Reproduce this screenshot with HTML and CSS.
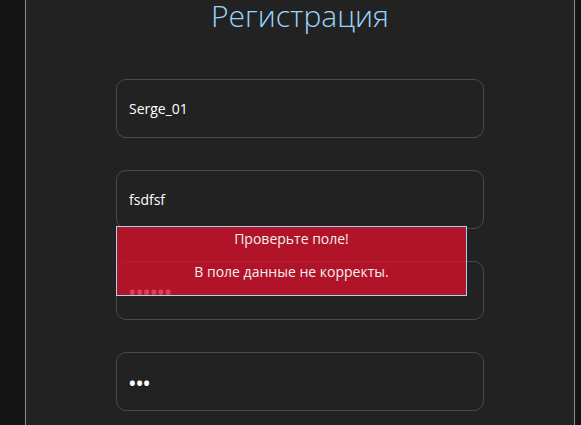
FILE: index.html
```html
<!DOCTYPE html>
<html lang="ru">
<head>
<meta charset="utf-8">
<title>Регистрация</title>
<link rel="stylesheet" href="styles.css">
</head>
<body>
<div class="gutter"></div>
<main class="panel">
  <h1 class="title">Регистрация</h1>
  <form class="form">
    <div class="field"><span class="value">Serge_01</span></div>
    <div class="field"><span class="value">fsdfsf</span></div>
    <div class="field"><span class="value dots">••••••</span></div>
    <div class="field"><span class="value dots">•••</span></div>
    <div class="tooltip">
      <p class="tip-line">Проверьте поле!</p>
      <p class="tip-line">В поле данные не корректы.</p>
    </div>
  </form>
</main>
<div class="gutter-right"></div>
</body>
</html>
```

FILE: styles.css
```css
html, body {
  margin: 0;
  height: 100%;
}
body {
  display: flex;
  background: #141414;
  font-family: "Open Sans", "Noto Sans", sans-serif;
  overflow: hidden;
}
.gutter {
  width: 25px;
  flex: none;
}
.panel {
  flex: none;
  background: #222222;
  border-left: 1px solid #8c8c8c;
  border-right: 1px solid #8c8c8c;
  box-sizing: border-box;
  width: 550px;
}
.gutter-right {
  flex: 1;
}
.title {
  margin: 0;
  font-size: 30px;
  line-height: 31px;
  font-weight: 300;
  color: #9ad6fb;
  text-align: center;
}
.form {
  position: relative;
  width: 368px;
  margin: 48px auto 0;
  display: flex;
  flex-direction: column;
  gap: 32px;
}
.field {
  height: 59px;
  box-sizing: border-box;
  border: 1px solid #4a4a4a;
  border-radius: 10px;
  display: flex;
  align-items: center;
  padding: 0 12px;
}
.value {
  color: #ffffff;
  font-size: 14px;
}
.dots {
  font-size: 23px;
  line-height: 24px;
  letter-spacing: -1.5px;
  margin-left: -1px;
  position: relative;
  top: 1px;
}
.tooltip {
  position: absolute;
  left: 0;
  top: 147px;
  width: 351px;
  height: 70px;
  box-sizing: border-box;
  border: 1px solid #a3d6f2;
  background: rgba(214, 16, 43, 0.8);
  padding-top: 2px;
  display: flex;
  flex-direction: column;
  gap: 13px;
}
.tip-line {
  margin: 0;
  font-size: 14px;
  line-height: 20px;
  color: #f4f0f0;
  text-align: center;
}
```
